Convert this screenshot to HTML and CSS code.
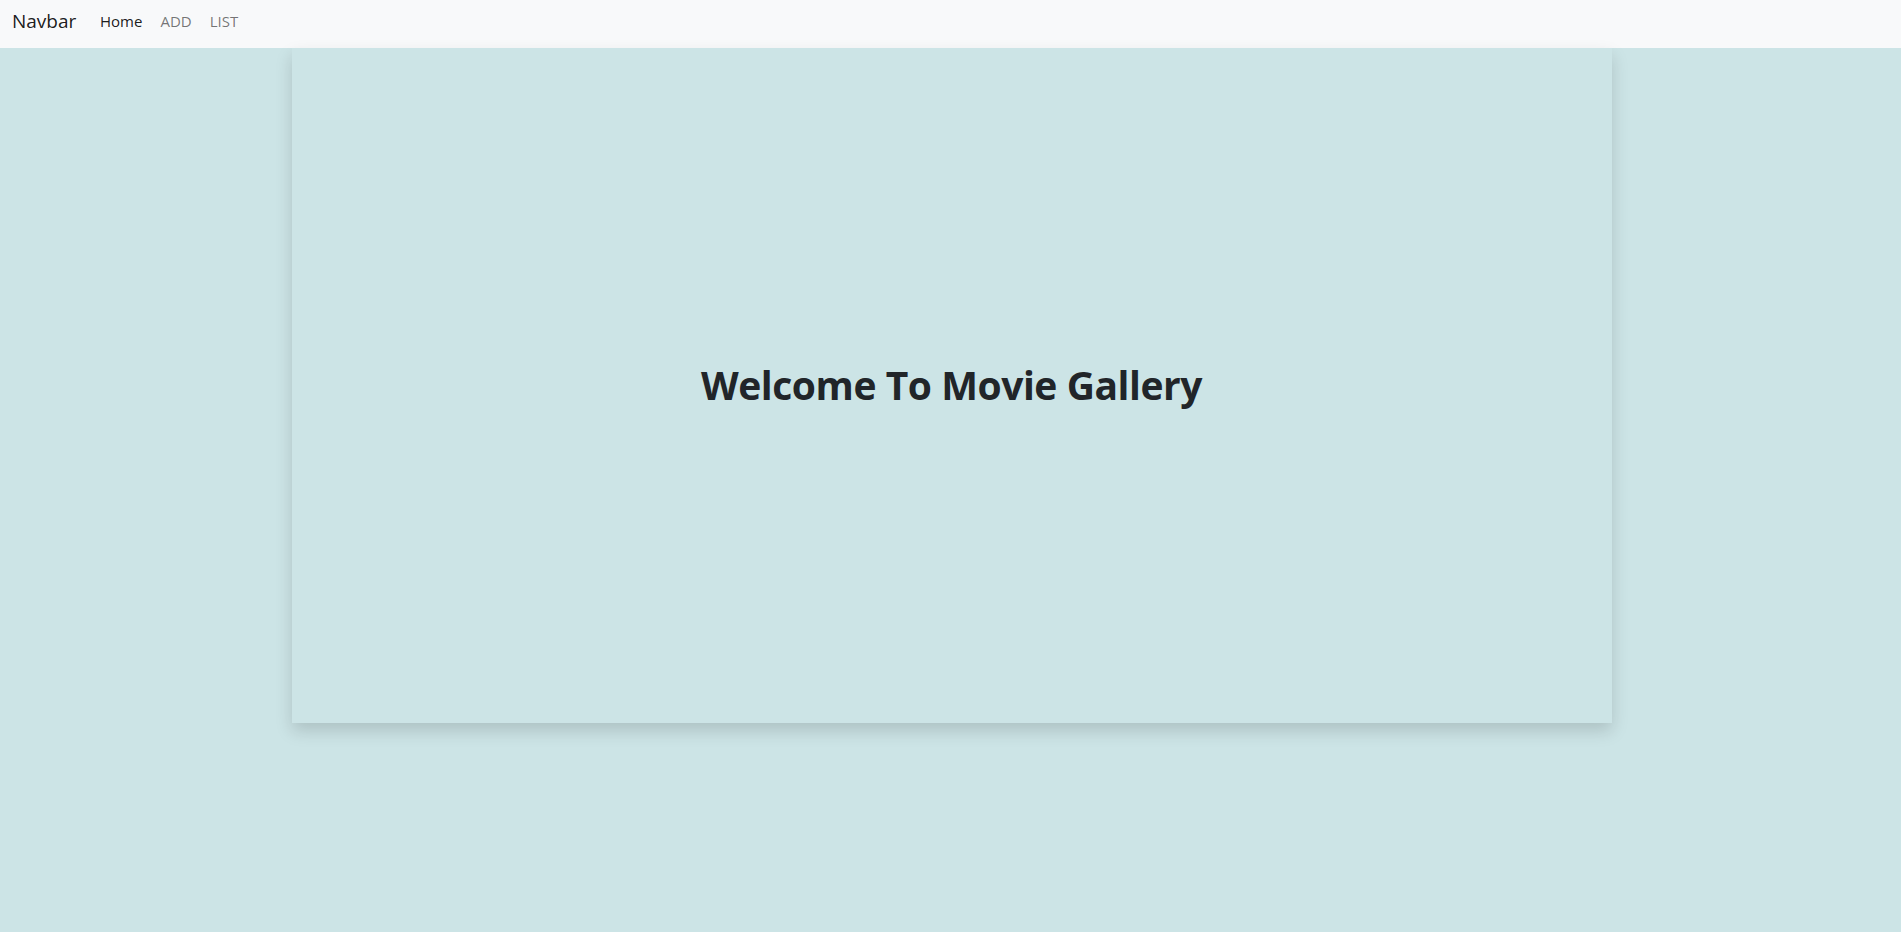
FILE: index.html
```html
<!DOCTYPE html>
<html lang="en">
<head>
<meta charset="utf-8">
<title>Movie Gallery</title>
<link rel="stylesheet" href="styles.css">
</head>
<body>
<nav class="navbar">
  <a class="brand" href="#">Navbar</a>
  <ul class="nav">
    <li><a class="nav-link active" href="#">Home</a></li>
    <li><a class="nav-link" href="#">ADD</a></li>
    <li><a class="nav-link" href="#">LIST</a></li>
  </ul>
</nav>
<main class="container">
  <section class="card">
    <h1 class="title">Welcome To Movie Gallery</h1>
  </section>
</main>
</body>
</html>
```
FILE: styles.css
```css
* { box-sizing: border-box; }
html, body { margin: 0; padding: 0; }
body {
  background: #cce4e6;
  font-family: "Open Sans", "Noto Sans", "Liberation Sans", sans-serif;
  color: #212529;
  min-height: 932px;
}
.navbar {
  height: 48px;
  background: #f8f9fa;
  display: flex;
  align-items: center;
  padding: 0 0 6px 12px;
}
.brand {
  font-size: 19px;
  color: rgba(0,0,0,.9);
  text-decoration: none;
  width: 79px;
}
.nav {
  list-style: none;
  display: flex;
  margin: 0;
  padding: 0;
}
.nav-link {
  display: block;
  font-size: 15px;
  padding: 8px 9px 8px 9px;
  color: rgba(0,0,0,.55);
  text-decoration: none;
}
.nav-link.active { color: rgba(0,0,0,.9); }
.container {
  width: 1320px;
  margin: 0 auto;
  position: relative;
  left: 1px;
}
.card {
  height: 675px;
  background: #cce4e6;
  box-shadow: 0 8px 16px rgba(0,0,0,.15);
  display: flex;
  align-items: center;
  justify-content: center;
}
.title {
  margin: 0 0 0 0;
  font-size: 39px;
  font-weight: 700;
  letter-spacing: -0.45px;
  line-height: 1.2;
}
```
